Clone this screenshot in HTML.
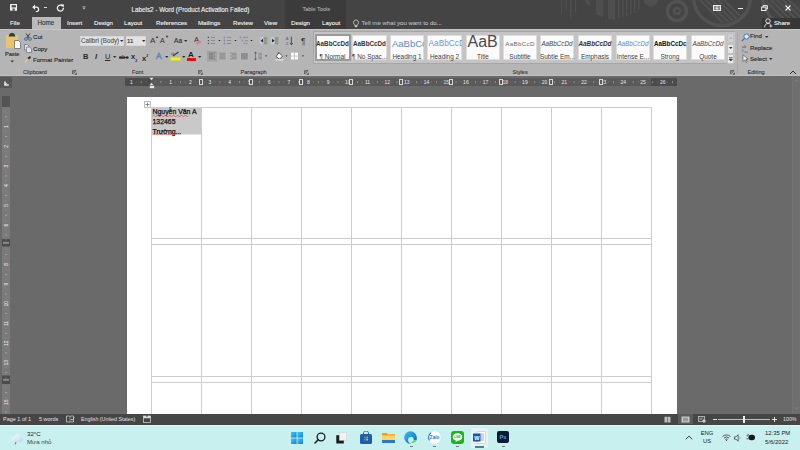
<!DOCTYPE html>
<html><head><meta charset="utf-8"><title>Word</title>
<style>
*{margin:0;padding:0;box-sizing:border-box}
html,body{width:800px;height:450px;overflow:hidden}
body{position:relative;background:#6a6a6a;font-family:"Liberation Sans",sans-serif;color:#262626}
.a{position:absolute;white-space:nowrap}
.t{font-size:6.1px;line-height:8px;-webkit-text-stroke:0.12px currentColor}
.w{color:#f0f0f0}
#tb{left:0;top:0;width:800px;height:30px;background:#444444}
#rib{left:0;top:29px;width:800px;height:47px;background:#b5b5b5;border-top:1px solid #c6c6c6;border-bottom:1px solid #c0c0c0}
#status{left:0;top:414px;width:800px;height:11px;background:#464646}
#task{left:0;top:425px;width:800px;height:25px;background:#c8f0ee;border-top:1px solid #def6f5}
#page{left:127px;top:97px;width:550px;height:317px;background:#fff}
</style></head><body>

<!-- Title bar -->
<div id="tb" class="a"></div>
<div class="a" style="left:285px;top:0;width:61px;height:30px;background:#3b3b3b"></div>

<!-- decorative pattern -->
<svg class="a" style="left:540px;top:0" width="260" height="30" viewBox="0 0 260 30">
 <g fill="#4f4f4f">
  <rect x="21" y="0" width="1.2" height="14"/><rect x="25.5" y="0" width="1.2" height="10"/><rect x="30" y="0" width="1.5" height="17"/><rect x="35" y="0" width="1.2" height="12"/>
  <path d="M45 0 H49 L51 6 L47 4 Z"/>
  <path d="M56 0 H63 V17 L56 14 Z"/>
  <path d="M68 0 H75 V20 L68 19 Z"/>
  <rect x="78" y="0" width="1.3" height="18"/><rect x="82" y="0" width="1.3" height="17"/><rect x="86" y="0" width="1.3" height="16"/><rect x="90" y="0" width="1.3" height="15"/><rect x="94" y="0" width="1.3" height="13"/><rect x="98" y="0" width="1.3" height="10"/>
  <circle cx="111" cy="-1" r="7.5"/>
 </g>
 <circle cx="137" cy="11" r="9.5" fill="none" stroke="#535353" stroke-width="3.4"/>
 <circle cx="137" cy="11" r="3" fill="none" stroke="#535353" stroke-width="2.2"/>
 <circle cx="182" cy="-3" r="28.5" fill="none" stroke="#525252" stroke-width="3.6"/>
 <clipPath id="cc"><circle cx="182" cy="-3" r="26"/></clipPath>
 <g clip-path="url(#cc)" stroke="#505050" stroke-width="2.4">
  <path d="M150 -10 L185 25 M156 -10 L191 25 M162 -10 L197 25 M168 -10 L203 25 M174 -10 L209 25"/>
 </g>
 <circle cx="262" cy="-8" r="40" fill="none" stroke="#525252" stroke-width="3.6"/>
 <clipPath id="cd"><circle cx="262" cy="-8" r="37"/></clipPath>
 <g clip-path="url(#cd)" stroke="#505050" stroke-width="2.4">
  <path d="M215 -10 L250 25 M221 -10 L256 25 M227 -10 L262 25 M233 -10 L268 25 M239 -10 L274 25"/>
 </g>
</svg>
<!-- QAT -->
<svg class="a" style="left:10px;top:4.3px" width="7.2" height="6.8" viewBox="0 0 7.2 6.8">
 <rect x="0" y="0" width="7.2" height="6.8" rx="0.7" fill="#f0f0f0"/>
 <rect x="1.6" y="1.2" width="4.3" height="2.2" fill="#444"/>
 <rect x="2.4" y="4.5" width="2.4" height="2.3" fill="#5a5a5a"/>
</svg>
<svg class="a" style="left:32px;top:4px" width="9" height="8" viewBox="0 0 9 8">
 <path d="M1 3.2 H5 A2.3 2.3 0 0 1 5 7.6 H3.8" fill="none" stroke="#f2f2f2" stroke-width="1.3"/>
 <path d="M0.2 3.2 L3 0.6 V5.8 Z" fill="#f2f2f2"/>
</svg>
<div class="a" style="left:44px;top:7px;width:2.8px;height:1.2px;background:#d8d8d8"></div>
<svg class="a" style="left:56px;top:4px" width="9" height="8" viewBox="0 0 9 8">
 <path d="M6.6 2 A3 3 0 1 0 7.4 4" fill="none" stroke="#f2f2f2" stroke-width="1.3"/>
 <path d="M4.8 0.3 L8 0.6 L7.6 3.8 Z" fill="#f2f2f2"/>
</svg>
<svg class="a" style="left:82px;top:6px" width="4" height="4" viewBox="0 0 4 4"><rect x="0.5" y="0" width="3" height="0.6" fill="#bbb"/><path d="M0.3 1.5H3.7L2 3.5Z" fill="#bbb"/></svg>
<!-- window controls -->
<svg class="a" style="left:713px;top:5px" width="8" height="6" viewBox="0 0 8 6">
 <rect x="0" y="0" width="8" height="6" fill="#e8e8e8"/>
 <rect x="1" y="1" width="6" height="4" fill="#8a8a8a"/>
 <path d="M4 1.2 V4.2 M2.7 3 L4 4.4 L5.3 3" stroke="#f4f4f4" stroke-width="0.8" fill="none"/>
</svg>
<div class="a" style="left:738px;top:8px;width:5px;height:1.3px;background:#eee"></div>
<svg class="a" style="left:761px;top:5px" width="7" height="6" viewBox="0 0 7 6">
 <rect x="0.6" y="2.1" width="4.3" height="3.4" fill="none" stroke="#eee" stroke-width="1"/>
 <path d="M2.1 2.1 V0.6 H6.4 V4 H4.9" fill="none" stroke="#eee" stroke-width="1"/>
</svg>
<svg class="a" style="left:785px;top:5px" width="6" height="6" viewBox="0 0 6 6">
 <path d="M0.5 0.5 L5.5 5.5 M5.5 0.5 L0.5 5.5" stroke="#f4f4f4" stroke-width="1.1"/>
</svg>
<div class="a t w" style="left:131.5px;top:5.5px;font-size:6.3px">Labels2 - Word (Product Activation Failed)</div>
<div class="a t" style="left:302.5px;top:5px;font-size:5.5px;color:#a9a9a9">Table Tools</div>

<!-- Tabs -->
<div class="a" style="left:32px;top:17px;width:28.5px;height:13px;background:#bababa"></div>
<div class="a t w" style="left:10px;top:18.9px">File</div>
<div class="a t" style="left:37.5px;top:18.8px;color:#333;font-size:6.3px">Home</div>
<div class="a t w" style="left:67px;top:18.9px">Insert</div>
<div class="a t w" style="left:94px;top:18.9px">Design</div>
<div class="a t w" style="left:124px;top:18.9px">Layout</div>
<div class="a t w" style="left:156px;top:18.9px">References</div>
<div class="a t w" style="left:198px;top:18.9px">Mailings</div>
<div class="a t w" style="left:233px;top:18.9px">Review</div>
<div class="a t w" style="left:264px;top:18.9px">View</div>
<div class="a t w" style="left:291px;top:18.9px">Design</div>
<div class="a t w" style="left:322px;top:18.9px">Layout</div>
<svg class="a" style="left:353px;top:19px" width="6" height="9" viewBox="0 0 6 9">
 <path d="M1.6 5.6 A2.5 2.5 0 1 1 4.4 5.6 V6.4 H1.6 Z" fill="none" stroke="#c8c8c8" stroke-width="0.9"/>
 <rect x="1.9" y="7" width="2.2" height="1.2" fill="#c8c8c8"/>
</svg>
<div class="a t" style="left:361.5px;top:18.9px;color:#b5b5b5">Tell me what you want to do...</div>
<div class="a" style="left:762px;top:18px;width:38px;height:11px;background:#373737"></div>
<svg class="a" style="left:764px;top:18px" width="9" height="10" viewBox="0 0 9 10">
 <circle cx="4" cy="3" r="2.2" fill="none" stroke="#eee" stroke-width="0.9"/>
 <path d="M0.6 9.4 A3.6 3.6 0 0 1 6.4 6.2" fill="none" stroke="#eee" stroke-width="0.9"/>
 <path d="M6.8 6.5V9.5M5.3 8H8.3" stroke="#eee" stroke-width="0.8"/>
</svg>
<div class="a t w" style="left:774px;top:18.9px">Share</div>

<!-- Ribbon -->
<div id="rib" class="a"></div>

<!-- Ribbon content -->
<!-- Clipboard -->
<svg class="a" style="left:5px;top:32px" width="17" height="18" viewBox="0 0 17 18">
 <rect x="1" y="3" width="12" height="13" fill="#e9c46f"/>
 <path d="M3.5 4.5 L4.5 2 L6 1 L8 1 L9.5 2 L10.5 4.5 Z" fill="#3a3a3a"/>
 <path d="M9.5 8.5 H13.5 L15.5 10.5 V16.5 H9.5 Z" fill="#fafafa" stroke="#6a6a6a" stroke-width="0.8"/>
</svg>
<div class="a t" style="left:5px;top:50px;font-size:5.6px">Paste</div>
<svg class="a" style="left:10px;top:60px" width="5" height="3"><path d="M0.5 0.5H4L2.25 2.5Z" fill="#333"/></svg>
<svg class="a" style="left:24px;top:33px" width="8" height="8" viewBox="0 0 8 8">
 <path d="M2 0.5 L5.2 5 M6 0.5 L2.8 5" stroke="#333" stroke-width="0.9" fill="none"/>
 <circle cx="2" cy="6" r="1.4" fill="none" stroke="#4a6a96" stroke-width="0.9"/>
 <circle cx="6" cy="6" r="1.4" fill="none" stroke="#4a6a96" stroke-width="0.9"/>
</svg>
<div class="a t" style="left:33px;top:32.9px">Cut</div>
<svg class="a" style="left:24px;top:44px" width="8" height="9" viewBox="0 0 8 9">
 <path d="M0.5 0.5H3.5L5 2V6H0.5Z" fill="#e4e4ec" stroke="#6a6a7a" stroke-width="0.7"/>
 <path d="M2.5 3H5.5L7.5 5V8.5H2.5Z" fill="#dfe3ee" stroke="#6a6a7a" stroke-width="0.7"/>
</svg>
<div class="a t" style="left:33px;top:44.5px">Copy</div>
<svg class="a" style="left:24px;top:55px" width="8" height="8" viewBox="0 0 8 8">
 <path d="M1 7 L4 4" stroke="#e8c070" stroke-width="2"/>
 <path d="M3.5 3 L6 1 L7 2.5 L5 4.5Z" fill="#2a2a2a"/>
</svg>
<div class="a t" style="left:33px;top:55.9px">Format Painter</div>
<div class="a t" style="left:23px;top:68px;color:#3a3a3a;font-size:5.6px">Clipboard</div>
<svg class="a" style="left:72px;top:70px" width="5" height="5"><path d="M0.5 0.5H4V1.2H1.2V4H0.5Z M2 2 L4.5 4.5 M4.5 2.5V4.5H2.5" stroke="#555" stroke-width="0.7" fill="none"/></svg>
<div class="a" style="left:78px;top:32px;width:1px;height:42px;background:#b4b4b4"></div>

<!-- Font -->
<div class="a" style="left:80px;top:36px;width:44px;height:10px;background:#e2e2e2;border:1px solid #d6d6d6"></div>
<div class="a t" style="left:81px;top:37px;color:#555;font-size:6.3px">Calibri (Body)</div>
<svg class="a" style="left:120px;top:40px" width="4" height="3"><path d="M0 0H3.5L1.75 2Z" fill="#333"/></svg>
<div class="a" style="left:126px;top:36px;width:20px;height:10px;background:#e2e2e2;border:1px solid #d6d6d6"></div>
<div class="a t" style="left:127px;top:37px;color:#333">11</div>
<svg class="a" style="left:142px;top:40px" width="4" height="3"><path d="M0 0H3.5L1.75 2Z" fill="#333"/></svg>
<div class="a" style="left:150px;top:36px;font-size:8px;line-height:9px;color:#333">A</div>
<div class="a" style="left:155px;top:35px;font-size:4px;line-height:4px;color:#333">▲</div>
<div class="a" style="left:160px;top:37px;font-size:7px;line-height:8px;color:#333">A</div>
<div class="a" style="left:165px;top:35px;font-size:4px;line-height:4px;color:#333">▼</div>
<div class="a" style="left:174px;top:36.2px;font-size:6.6px;line-height:9px;color:#333;-webkit-text-stroke:0.15px #333">Aa</div>
<svg class="a" style="left:183.5px;top:40px" width="4" height="3"><path d="M0 0H3.5L1.75 2Z" fill="#333"/></svg>
<div class="a" style="left:194px;top:35px;font-size:7.5px;line-height:9px;color:#333">A</div>
<div class="a" style="left:196px;top:41px;width:5px;height:3px;background:#e07a9a;transform:rotate(-30deg)"></div>

<div class="a" style="left:83px;top:52px;font-size:7.5px;line-height:9px;font-weight:bold;color:#2a2a2a">B</div>
<div class="a" style="left:95px;top:52px;font-size:7.5px;line-height:9px;font-weight:bold;font-style:italic;color:#2a2a2a">I</div>
<div class="a" style="left:105px;top:52px;font-size:7.5px;line-height:9px;text-decoration:underline;color:#2a2a2a">U</div>
<svg class="a" style="left:113px;top:56px" width="4" height="3"><path d="M0 0H3.5L1.75 2Z" fill="#333"/></svg>
<div class="a" style="left:119px;top:53px;font-size:5.5px;line-height:8px;text-decoration:line-through;font-weight:bold;color:#2a2a2a">abc</div>
<div class="a" style="left:131px;top:52px;font-size:7.5px;line-height:9px;font-weight:bold;color:#2a2a2a">x<sub style="font-size:3.5px">2</sub></div>
<div class="a" style="left:142px;top:52px;font-size:7.5px;line-height:9px;font-weight:bold;color:#2a2a2a">x<sup style="font-size:3.5px">2</sup></div>
<div class="a" style="left:156px;top:51px;font-size:8.5px;line-height:10px;color:#b9cde6;-webkit-text-stroke:0.6px #5f86b8">A</div>
<svg class="a" style="left:165px;top:56px" width="4" height="3"><path d="M0 0H3.5L1.75 2Z" fill="#333"/></svg>
<svg class="a" style="left:170px;top:51px" width="11" height="10" viewBox="0 0 11 10">
 <path d="M3 5 L8.5 1" stroke="#3a3a55" stroke-width="1.3"/>
 <text x="1" y="4" font-size="3" fill="#444" font-family="Liberation Sans">ab</text>
 <rect x="0.5" y="6.5" width="10" height="3" fill="#f2f20a"/>
</svg>
<svg class="a" style="left:182px;top:56px" width="4" height="3"><path d="M0 0H3.5L1.75 2Z" fill="#333"/></svg>
<div class="a" style="left:188px;top:50px;font-size:8px;line-height:9px;font-weight:bold;color:#222">A</div>
<div class="a" style="left:187px;top:58px;width:9px;height:2.5px;background:#e01010"></div>
<svg class="a" style="left:198px;top:56px" width="4" height="3"><path d="M0 0H3.5L1.75 2Z" fill="#333"/></svg>
<div class="a t" style="left:132px;top:68px;color:#3a3a3a;font-size:5.6px">Font</div>
<svg class="a" style="left:198px;top:70px" width="5" height="5"><path d="M0.5 0.5H4V1.2H1.2V4H0.5Z M2 2 L4.5 4.5 M4.5 2.5V4.5H2.5" stroke="#555" stroke-width="0.7" fill="none"/></svg>
<div class="a" style="left:204px;top:32px;width:1px;height:42px;background:#b4b4b4"></div>

<!-- Paragraph -->
<svg class="a" style="left:204px;top:32px" width="106" height="32" viewBox="0 0 106 32">
 <g fill="#3e4f6e"><rect x="3.8" y="4.8" width="1.2" height="1.2"/><rect x="3.8" y="8" width="1.2" height="1.2"/><rect x="3.8" y="10.9" width="1.2" height="1.2"/></g>
 <g stroke="#7a7a7a" stroke-width="0.7"><path d="M6.8 5.4H11M6.8 8.6H11M6.8 11.5H11"/></g>
 <path d="M14.3 7.9H16.6L15.45 9.3Z" fill="#222"/>
 <g fill="#5a7aa8"><rect x="19.8" y="4.6" width="0.9" height="1.8"/><rect x="19.8" y="7.8" width="0.9" height="1.8"/><rect x="19.8" y="10.7" width="0.9" height="1.8"/></g>
 <g stroke="#7a7a7a" stroke-width="0.7"><path d="M22.8 5.4H27.2M22.8 8.6H27.2M22.8 11.5H27.2"/></g>
 <path d="M30.3 7.9H32.6L31.45 9.3Z" fill="#222"/>
 <g fill="#7a8aa8"><rect x="35.8" y="4.6" width="1.4" height="1.5"/><rect x="37.8" y="7.8" width="1.4" height="1.5"/><rect x="40.2" y="10.6" width="1.2" height="1.4"/></g>
 <g stroke="#7a7a7a" stroke-width="0.7"><path d="M39 5.4H43.8M41 8.6H43.8M42 11.5H43.5"/></g>
 <path d="M46.3 7.9H48.6L47.45 9.3Z" fill="#222"/>
 <rect x="55.6" y="5" width="7.8" height="7.5" fill="#9aa39a"/>
 <rect x="55.6" y="5" width="4.2" height="7.5" fill="#c4c8d0"/>
 <path d="M59.4 6.2H62.6M59.4 8H62.6M59.4 9.8H62.6M59.4 11.5H62.6" stroke="#7a857a" stroke-width="0.6"/>
 <path d="M56.6 8.7 L59 6.8 V10.6Z" fill="#1e2840"/>
 <rect x="66.6" y="5" width="7.8" height="7.5" fill="#9aa39a"/>
 <rect x="66.6" y="5" width="4.2" height="7.5" fill="#c4c8d0"/>
 <path d="M70.8 6.2H74M70.8 8H74M70.8 9.8H74M70.8 11.5H74" stroke="#7a857a" stroke-width="0.6"/>
 <path d="M70.6 8.7 L68 6.8 V10.6Z" fill="#1e2840"/>
 <text x="81.5" y="8.4" font-size="4.4" fill="#6a72a8" font-family="Liberation Sans" font-weight="bold">A</text>
 <text x="81.7" y="12.9" font-size="4.4" fill="#7a72b0" font-family="Liberation Sans" font-weight="bold">Z</text>
 <path d="M87.4 4.6V12.4M86 11L87.4 12.8L88.8 11" stroke="#333" stroke-width="0.75" fill="none"/>
 <text x="97" y="12.4" font-size="8.2" fill="#333" font-family="Liberation Sans">¶</text>
 <!-- row 2 -->
 <rect x="2.9" y="18.9" width="10" height="10.7" fill="#a2a2a2"/>
 <g stroke="#7c7c7c" stroke-width="0.9"><path d="M5 21.2H11M5 22.6H9M5 24H11M5 25.4H9M5 26.8H11"/></g>
 <g stroke="#888" stroke-width="0.9"><path d="M15 21.2H22M16 22.6H21M15 24H22M16 25.4H21M15 26.8H22"/></g>
 <g stroke="#888" stroke-width="0.9"><path d="M26 21.2H32.5M28 22.6H32.5M26 24H32.5M28 25.4H32.5M26 26.8H32.5"/></g>
 <rect x="37" y="21" width="6.8" height="6.5" fill="#8e8e8e"/>
 <g fill="#3e5a80"><path d="M51.5 19.6 L53 21.6 H50Z"/><path d="M51.5 28.4 L53 26.4 H50Z"/></g>
 <path d="M51.5 21.2V26.8" stroke="#4a6a96" stroke-width="0.7"/>
 <g stroke="#8a8a8a" stroke-width="0.9"><path d="M54.5 21.2H58M54.5 22.6H58M54.5 24H58M54.5 25.4H58M54.5 26.8H58"/></g>
 <path d="M61 23.4H63.2L62.1 24.8Z" fill="#222"/>
 <path d="M72 24.5 L75 20.8 L78.6 24 L75.6 27.2Z" fill="#fafafa" stroke="#3a3a3a" stroke-width="0.8"/>
 <path d="M73.5 21 L75 20.8" stroke="#3a3a3a" stroke-width="0.8"/>
 <rect x="71.5" y="27.3" width="8" height="1.2" fill="#e8e8e8"/>
 <path d="M81.3 23.4H83.5L82.4 24.8Z" fill="#222"/>
 <rect x="87" y="20.7" width="7" height="6.8" fill="#fafafa"/>
 <path d="M90.5 20.7V27.5M87 24.1H94" stroke="#a8a8a8" stroke-width="0.6"/>
 <path d="M97.8 23.4H100L98.9 24.8Z" fill="#222"/>
</svg>
<div class="a t" style="left:240.5px;top:68px;color:#3a3a3a;font-size:5.6px">Paragraph</div>
<svg class="a" style="left:304px;top:70px" width="5" height="5"><path d="M0.5 0.5H4V1.2H1.2V4H0.5Z M2 2 L4.5 4.5 M4.5 2.5V4.5H2.5" stroke="#555" stroke-width="0.7" fill="none"/></svg>
<div class="a" style="left:310px;top:32px;width:1px;height:42px;background:#b4b4b4"></div>

<!-- Styles -->
<div class="a" style="left:313px;top:31px;width:422px;height:33px;background:#c4c4c4;border:1px solid #a6a6a6;border-right:none"></div>
<div class="a" style="left:314.5px;top:33.5px;width:36px;height:27.5px;background:#fbfbfb;border:2.5px solid #9a9a9a"></div>
<div class="a" style="left:352px;top:34.5px;width:35px;height:25px;background:#fbfbfb;border:1px solid #dcdcdc"></div>
<div class="a" style="left:390px;top:34.5px;width:34px;height:25px;background:#fbfbfb;border:1px solid #dcdcdc"></div>
<div class="a" style="left:427px;top:34.5px;width:35px;height:25px;background:#fbfbfb;border:1px solid #dcdcdc"></div>
<div class="a" style="left:466px;top:34.5px;width:34px;height:25px;background:#fbfbfb;border:1px solid #dcdcdc"></div>
<div class="a" style="left:503px;top:34.5px;width:34px;height:25px;background:#fbfbfb;border:1px solid #dcdcdc"></div>
<div class="a" style="left:540px;top:34.5px;width:34px;height:25px;background:#fbfbfb;border:1px solid #dcdcdc"></div>
<div class="a" style="left:578px;top:34.5px;width:34px;height:25px;background:#fbfbfb;border:1px solid #dcdcdc"></div>
<div class="a" style="left:616px;top:34.5px;width:34px;height:25px;background:#fbfbfb;border:1px solid #dcdcdc"></div>
<div class="a" style="left:653px;top:34.5px;width:34px;height:25px;background:#fbfbfb;border:1px solid #dcdcdc"></div>
<div class="a" style="left:691px;top:34.5px;width:34px;height:25px;background:#fbfbfb;border:1px solid #dcdcdc"></div>
<div class="a" style="left:315px;top:39.5px;width:35px;font-size:6.3px;line-height:8px;font-weight:bold;color:#333;text-align:center">AaBbCcDd</div>
<div class="a" style="left:315px;top:52.8px;width:35px;text-align:center;font-size:6.4px;line-height:8px;color:#3c3c3c">¶ Normal</div>
<div class="a" style="left:352px;top:39.5px;width:35px;font-size:6.3px;line-height:8px;font-weight:bold;color:#333;text-align:center">AaBbCcDd</div>
<div class="a" style="left:352px;top:52.8px;width:35px;text-align:center;font-size:6.4px;line-height:8px;color:#3c3c3c">¶ No Spac...</div>
<div class="a" style="left:390px;top:38.5px;width:34px;font-size:9.5px;line-height:10px;color:#5d8cc4;padding-left:2px;overflow:hidden">AaBbCc</div>
<div class="a" style="left:390px;top:52.8px;width:34px;text-align:center;font-size:6.4px;line-height:8px;color:#3c3c3c">Heading 1</div>
<div class="a" style="left:427px;top:39.2px;width:35px;font-size:8.3px;line-height:9px;color:#6d9ad0;padding-left:1.5px;overflow:hidden">AaBbCcD</div>
<div class="a" style="left:427px;top:52.8px;width:35px;text-align:center;font-size:6.4px;line-height:8px;color:#3c3c3c">Heading 2</div>
<svg class="a" style="left:466px;top:35px" width="34" height="13" viewBox="0 0 34 13"><text x="1.5" y="11.8" font-size="16" fill="#4a4a4a" font-family="Liberation Sans">AaB</text></svg>
<div class="a" style="left:466px;top:52.8px;width:34px;text-align:center;font-size:6.4px;line-height:8px;color:#3c3c3c">Title</div>
<div class="a" style="left:503px;top:39.5px;width:34px;font-size:6.2px;line-height:8px;color:#6a6a6a;letter-spacing:0.35px;text-align:center">AaBbCcD</div>
<div class="a" style="left:503px;top:52.8px;width:34px;text-align:center;font-size:6.4px;line-height:8px;color:#3c3c3c">Subtitle</div>
<div class="a" style="left:540px;top:39.5px;width:34px;font-size:6.3px;line-height:8px;font-style:italic;color:#444;text-align:center">AaBbCcDd</div>
<div class="a" style="left:540px;top:52.8px;width:34px;text-align:center;font-size:6.4px;line-height:8px;color:#3c3c3c">Subtle Em...</div>
<div class="a" style="left:578px;top:39.5px;width:34px;font-size:6.3px;line-height:8px;font-style:italic;font-weight:bold;color:#333;text-align:center">AaBbCcDd</div>
<div class="a" style="left:578px;top:52.8px;width:34px;text-align:center;font-size:6.4px;line-height:8px;color:#3c3c3c">Emphasis</div>
<div class="a" style="left:616px;top:39.5px;width:34px;font-size:6.3px;line-height:8px;font-style:italic;color:#5b8cc7;text-align:center">AaBbCcDd</div>
<div class="a" style="left:616px;top:52.8px;width:34px;text-align:center;font-size:6.4px;line-height:8px;color:#3c3c3c">Intense E...</div>
<div class="a" style="left:653px;top:39.5px;width:34px;font-size:6.3px;line-height:8px;font-weight:bold;color:#111;padding-left:1px;overflow:hidden">AaBbCcDc</div>
<div class="a" style="left:653px;top:52.8px;width:34px;text-align:center;font-size:6.4px;line-height:8px;color:#3c3c3c">Strong</div>
<div class="a" style="left:691px;top:39.5px;width:34px;font-size:6.3px;line-height:8px;font-style:italic;color:#444;text-align:center">AaBbCcDd</div>
<div class="a" style="left:691px;top:52.8px;width:34px;text-align:center;font-size:6.4px;line-height:8px;color:#3c3c3c">Quote</div>
<div class="a" style="left:727px;top:33px;width:7px;height:10px;background:#cfcfcf;border:1px solid #c2c2c2"></div>
<div class="a" style="left:727px;top:43.5px;width:7px;height:10px;background:#e8e8e8;border:1px solid #c2c2c2"></div>
<div class="a" style="left:727px;top:54px;width:7px;height:9.5px;background:#e8e8e8;border:1px solid #c2c2c2"></div>
<svg class="a" style="left:729px;top:47px" width="4" height="3"><path d="M0 0H3.5L1.75 2Z" fill="#333"/></svg>
<svg class="a" style="left:729px;top:56.5px" width="4" height="5"><path d="M0 0.5H3.5M0 2H3.5L1.75 4Z" stroke="#333" stroke-width="0.6" fill="#333"/></svg>
<svg class="a" style="left:729px;top:37px" width="4" height="3"><path d="M0 2H3.5L1.75 0Z" fill="#b0b0b0"/></svg>
<div class="a t" style="left:512.5px;top:68px;color:#3a3a3a;font-size:5.6px">Styles</div>
<svg class="a" style="left:730px;top:70px" width="5" height="5"><path d="M0.5 0.5H4V1.2H1.2V4H0.5Z M2 2 L4.5 4.5 M4.5 2.5V4.5H2.5" stroke="#555" stroke-width="0.7" fill="none"/></svg>
<div class="a" style="left:737px;top:32px;width:1px;height:42px;background:#a8a8a8"></div>

<!-- Editing -->
<svg class="a" style="left:741px;top:33px" width="9" height="9" viewBox="0 0 9 9">
 <circle cx="5.5" cy="3.5" r="2.6" fill="#dbe6f4" stroke="#3b6fb0" stroke-width="0.9"/>
 <path d="M3.6 5.4 L0.8 8.2" stroke="#3b6fb0" stroke-width="1.2"/>
</svg>
<div class="a t" style="left:750px;top:32.4px">Find</div>
<svg class="a" style="left:765px;top:36px" width="4" height="3"><path d="M0 0H3.5L1.75 2Z" fill="#333"/></svg>
<svg class="a" style="left:741px;top:44px" width="9" height="9" viewBox="0 0 9 9">
 <text x="1" y="4" font-size="4" fill="#555" font-family="Liberation Sans">ab</text>
 <text x="3" y="8.5" font-size="4" fill="#3b6fb0" font-family="Liberation Sans">ac</text>
 <path d="M1 5 L2.5 7 L1 8" stroke="#3b6fb0" stroke-width="0.6" fill="none"/>
</svg>
<div class="a t" style="left:750px;top:44px">Replace</div>
<svg class="a" style="left:742px;top:54px" width="7" height="9" viewBox="0 0 7 9">
 <path d="M1 0.8 V7.5 L2.8 5.8 L4.2 8.5 L5.2 8 L3.9 5.3 L6.2 5.3 Z" fill="#f4f4f4" stroke="#444" stroke-width="0.6"/>
</svg>
<div class="a t" style="left:750px;top:55px">Select</div>
<svg class="a" style="left:769px;top:58px" width="4" height="3"><path d="M0 0H3.5L1.75 2Z" fill="#333"/></svg>
<div class="a t" style="left:747.5px;top:68px;color:#3a3a3a;font-size:5.6px">Editing</div>
<div class="a" style="left:776px;top:32px;width:1px;height:42px;background:#b4b4b4"></div>
<svg class="a" style="left:789px;top:70px" width="8" height="5" viewBox="0 0 8 5"><path d="M1 4 L4 1 L7 4" stroke="#333" stroke-width="1" fill="none"/></svg>

<!-- Ruler -->
<div class="a" style="left:0;top:77px;width:12px;height:11px;background:#575757"></div>
<svg class="a" style="left:4px;top:80.5px" width="5" height="5" viewBox="0 0 5 5"><path d="M0.2 0.5 H1.8 V3.2 H4.8 V4.8 H0.2 Z" fill="#e8e8e8"/><path d="M1.8 1.8 L3.4 3.2" stroke="#e8e8e8" stroke-width="0.8"/></svg>
<svg class="a" style="left:125px;top:77px" width="552" height="10" viewBox="0 0 552 10">
<rect x="0" y="1" width="552" height="8" fill="#5a5a5a"/>
<rect x="0" y="1" width="26" height="8" fill="#4b4b4b"/>
<rect x="526" y="1" width="26" height="8" fill="#4b4b4b"/>
<rect x="10.8" y="4.6" width="0.8" height="0.8" fill="#8a8a8a"/>
<rect x="15.8" y="4" width="0.8" height="2.2" fill="#9a9a9a"/>
<rect x="20.7" y="4.6" width="0.8" height="0.8" fill="#8a8a8a"/>
<rect x="30.5" y="4.6" width="0.8" height="0.8" fill="#8a8a8a"/>
<rect x="35.4" y="4" width="0.8" height="2.2" fill="#9a9a9a"/>
<rect x="40.4" y="4.6" width="0.8" height="0.8" fill="#8a8a8a"/>
<rect x="50.2" y="4.6" width="0.8" height="0.8" fill="#8a8a8a"/>
<rect x="55.1" y="4" width="0.8" height="2.2" fill="#9a9a9a"/>
<rect x="60.0" y="4.6" width="0.8" height="0.8" fill="#8a8a8a"/>
<rect x="69.9" y="4.6" width="0.8" height="0.8" fill="#8a8a8a"/>
<rect x="74.8" y="4" width="0.8" height="2.2" fill="#9a9a9a"/>
<rect x="79.7" y="4.6" width="0.8" height="0.8" fill="#8a8a8a"/>
<rect x="89.6" y="4.6" width="0.8" height="0.8" fill="#8a8a8a"/>
<rect x="94.5" y="4" width="0.8" height="2.2" fill="#9a9a9a"/>
<rect x="99.4" y="4.6" width="0.8" height="0.8" fill="#8a8a8a"/>
<rect x="109.2" y="4.6" width="0.8" height="0.8" fill="#8a8a8a"/>
<rect x="114.2" y="4" width="0.8" height="2.2" fill="#9a9a9a"/>
<rect x="119.1" y="4.6" width="0.8" height="0.8" fill="#8a8a8a"/>
<rect x="128.9" y="4.6" width="0.8" height="0.8" fill="#8a8a8a"/>
<rect x="133.8" y="4" width="0.8" height="2.2" fill="#9a9a9a"/>
<rect x="138.8" y="4.6" width="0.8" height="0.8" fill="#8a8a8a"/>
<rect x="148.6" y="4.6" width="0.8" height="0.8" fill="#8a8a8a"/>
<rect x="153.5" y="4" width="0.8" height="2.2" fill="#9a9a9a"/>
<rect x="158.4" y="4.6" width="0.8" height="0.8" fill="#8a8a8a"/>
<rect x="168.3" y="4.6" width="0.8" height="0.8" fill="#8a8a8a"/>
<rect x="173.2" y="4" width="0.8" height="2.2" fill="#9a9a9a"/>
<rect x="178.1" y="4.6" width="0.8" height="0.8" fill="#8a8a8a"/>
<rect x="188.0" y="4.6" width="0.8" height="0.8" fill="#8a8a8a"/>
<rect x="192.9" y="4" width="0.8" height="2.2" fill="#9a9a9a"/>
<rect x="197.8" y="4.6" width="0.8" height="0.8" fill="#8a8a8a"/>
<rect x="207.6" y="4.6" width="0.8" height="0.8" fill="#8a8a8a"/>
<rect x="212.6" y="4" width="0.8" height="2.2" fill="#9a9a9a"/>
<rect x="217.5" y="4.6" width="0.8" height="0.8" fill="#8a8a8a"/>
<rect x="227.3" y="4.6" width="0.8" height="0.8" fill="#8a8a8a"/>
<rect x="232.2" y="4" width="0.8" height="2.2" fill="#9a9a9a"/>
<rect x="237.2" y="4.6" width="0.8" height="0.8" fill="#8a8a8a"/>
<rect x="247.0" y="4.6" width="0.8" height="0.8" fill="#8a8a8a"/>
<rect x="251.9" y="4" width="0.8" height="2.2" fill="#9a9a9a"/>
<rect x="256.8" y="4.6" width="0.8" height="0.8" fill="#8a8a8a"/>
<rect x="266.7" y="4.6" width="0.8" height="0.8" fill="#8a8a8a"/>
<rect x="271.6" y="4" width="0.8" height="2.2" fill="#9a9a9a"/>
<rect x="276.5" y="4.6" width="0.8" height="0.8" fill="#8a8a8a"/>
<rect x="286.4" y="4.6" width="0.8" height="0.8" fill="#8a8a8a"/>
<rect x="291.3" y="4" width="0.8" height="2.2" fill="#9a9a9a"/>
<rect x="296.2" y="4.6" width="0.8" height="0.8" fill="#8a8a8a"/>
<rect x="306.0" y="4.6" width="0.8" height="0.8" fill="#8a8a8a"/>
<rect x="311.0" y="4" width="0.8" height="2.2" fill="#9a9a9a"/>
<rect x="315.9" y="4.6" width="0.8" height="0.8" fill="#8a8a8a"/>
<rect x="325.7" y="4.6" width="0.8" height="0.8" fill="#8a8a8a"/>
<rect x="330.6" y="4" width="0.8" height="2.2" fill="#9a9a9a"/>
<rect x="335.6" y="4.6" width="0.8" height="0.8" fill="#8a8a8a"/>
<rect x="345.4" y="4.6" width="0.8" height="0.8" fill="#8a8a8a"/>
<rect x="350.3" y="4" width="0.8" height="2.2" fill="#9a9a9a"/>
<rect x="355.2" y="4.6" width="0.8" height="0.8" fill="#8a8a8a"/>
<rect x="365.1" y="4.6" width="0.8" height="0.8" fill="#8a8a8a"/>
<rect x="370.0" y="4" width="0.8" height="2.2" fill="#9a9a9a"/>
<rect x="374.9" y="4.6" width="0.8" height="0.8" fill="#8a8a8a"/>
<rect x="384.8" y="4.6" width="0.8" height="0.8" fill="#8a8a8a"/>
<rect x="389.7" y="4" width="0.8" height="2.2" fill="#9a9a9a"/>
<rect x="394.6" y="4.6" width="0.8" height="0.8" fill="#8a8a8a"/>
<rect x="404.4" y="4.6" width="0.8" height="0.8" fill="#8a8a8a"/>
<rect x="409.4" y="4" width="0.8" height="2.2" fill="#9a9a9a"/>
<rect x="414.3" y="4.6" width="0.8" height="0.8" fill="#8a8a8a"/>
<rect x="424.1" y="4.6" width="0.8" height="0.8" fill="#8a8a8a"/>
<rect x="429.0" y="4" width="0.8" height="2.2" fill="#9a9a9a"/>
<rect x="434.0" y="4.6" width="0.8" height="0.8" fill="#8a8a8a"/>
<rect x="443.8" y="4.6" width="0.8" height="0.8" fill="#8a8a8a"/>
<rect x="448.7" y="4" width="0.8" height="2.2" fill="#9a9a9a"/>
<rect x="453.6" y="4.6" width="0.8" height="0.8" fill="#8a8a8a"/>
<rect x="463.5" y="4.6" width="0.8" height="0.8" fill="#8a8a8a"/>
<rect x="468.4" y="4" width="0.8" height="2.2" fill="#9a9a9a"/>
<rect x="473.3" y="4.6" width="0.8" height="0.8" fill="#8a8a8a"/>
<rect x="483.2" y="4.6" width="0.8" height="0.8" fill="#8a8a8a"/>
<rect x="488.1" y="4" width="0.8" height="2.2" fill="#9a9a9a"/>
<rect x="493.0" y="4.6" width="0.8" height="0.8" fill="#8a8a8a"/>
<rect x="502.8" y="4.6" width="0.8" height="0.8" fill="#8a8a8a"/>
<rect x="507.8" y="4" width="0.8" height="2.2" fill="#9a9a9a"/>
<rect x="512.7" y="4.6" width="0.8" height="0.8" fill="#8a8a8a"/>
<rect x="522.5" y="4.6" width="0.8" height="0.8" fill="#8a8a8a"/>
<rect x="527.4" y="4" width="0.8" height="2.2" fill="#9a9a9a"/>
<rect x="532.4" y="4.6" width="0.8" height="0.8" fill="#8a8a8a"/>
<rect x="542.2" y="4.6" width="0.8" height="0.8" fill="#8a8a8a"/>
<rect x="547.1" y="4" width="0.8" height="2.2" fill="#9a9a9a"/>
<text x="6.3" y="7.2" font-size="5" text-anchor="middle" fill="#e6e6e6" font-family="Liberation Sans">1</text>
<text x="45.7" y="7.2" font-size="5" text-anchor="middle" fill="#e6e6e6" font-family="Liberation Sans">1</text>
<text x="65.4" y="7.2" font-size="5" text-anchor="middle" fill="#e6e6e6" font-family="Liberation Sans">2</text>
<text x="85.0" y="7.2" font-size="5" text-anchor="middle" fill="#e6e6e6" font-family="Liberation Sans">3</text>
<text x="104.7" y="7.2" font-size="5" text-anchor="middle" fill="#e6e6e6" font-family="Liberation Sans">4</text>
<text x="124.4" y="7.2" font-size="5" text-anchor="middle" fill="#e6e6e6" font-family="Liberation Sans">5</text>
<text x="144.1" y="7.2" font-size="5" text-anchor="middle" fill="#e6e6e6" font-family="Liberation Sans">6</text>
<text x="163.8" y="7.2" font-size="5" text-anchor="middle" fill="#e6e6e6" font-family="Liberation Sans">7</text>
<text x="183.4" y="7.2" font-size="5" text-anchor="middle" fill="#e6e6e6" font-family="Liberation Sans">8</text>
<text x="203.1" y="7.2" font-size="5" text-anchor="middle" fill="#e6e6e6" font-family="Liberation Sans">9</text>
<text x="222.8" y="7.2" font-size="5" text-anchor="middle" fill="#e6e6e6" font-family="Liberation Sans">10</text>
<text x="242.5" y="7.2" font-size="5" text-anchor="middle" fill="#e6e6e6" font-family="Liberation Sans">11</text>
<text x="262.2" y="7.2" font-size="5" text-anchor="middle" fill="#e6e6e6" font-family="Liberation Sans">12</text>
<text x="281.8" y="7.2" font-size="5" text-anchor="middle" fill="#e6e6e6" font-family="Liberation Sans">13</text>
<text x="301.5" y="7.2" font-size="5" text-anchor="middle" fill="#e6e6e6" font-family="Liberation Sans">14</text>
<text x="321.2" y="7.2" font-size="5" text-anchor="middle" fill="#e6e6e6" font-family="Liberation Sans">15</text>
<text x="340.9" y="7.2" font-size="5" text-anchor="middle" fill="#e6e6e6" font-family="Liberation Sans">16</text>
<text x="360.6" y="7.2" font-size="5" text-anchor="middle" fill="#e6e6e6" font-family="Liberation Sans">17</text>
<text x="380.2" y="7.2" font-size="5" text-anchor="middle" fill="#e6e6e6" font-family="Liberation Sans">18</text>
<text x="399.9" y="7.2" font-size="5" text-anchor="middle" fill="#e6e6e6" font-family="Liberation Sans">19</text>
<text x="419.6" y="7.2" font-size="5" text-anchor="middle" fill="#e6e6e6" font-family="Liberation Sans">20</text>
<text x="439.3" y="7.2" font-size="5" text-anchor="middle" fill="#e6e6e6" font-family="Liberation Sans">21</text>
<text x="459.0" y="7.2" font-size="5" text-anchor="middle" fill="#e6e6e6" font-family="Liberation Sans">22</text>
<text x="478.6" y="7.2" font-size="5" text-anchor="middle" fill="#e6e6e6" font-family="Liberation Sans">23</text>
<text x="498.3" y="7.2" font-size="5" text-anchor="middle" fill="#e6e6e6" font-family="Liberation Sans">24</text>
<text x="518.0" y="7.2" font-size="5" text-anchor="middle" fill="#e6e6e6" font-family="Liberation Sans">25</text>
<text x="537.7" y="7.2" font-size="5" text-anchor="middle" fill="#e6e6e6" font-family="Liberation Sans">26</text>
<rect x="74.0" y="2" width="4" height="6" fill="#d8d8d8"/><rect x="75.0" y="3" width="2" height="4" fill="#5a5a5a"/>
<rect x="124.0" y="2" width="4" height="6" fill="#d8d8d8"/><rect x="125.0" y="3" width="2" height="4" fill="#5a5a5a"/>
<rect x="174.0" y="2" width="4" height="6" fill="#d8d8d8"/><rect x="175.0" y="3" width="2" height="4" fill="#5a5a5a"/>
<rect x="224.0" y="2" width="4" height="6" fill="#d8d8d8"/><rect x="225.0" y="3" width="2" height="4" fill="#5a5a5a"/>
<rect x="274.0" y="2" width="4" height="6" fill="#d8d8d8"/><rect x="275.0" y="3" width="2" height="4" fill="#5a5a5a"/>
<rect x="324.0" y="2" width="4" height="6" fill="#d8d8d8"/><rect x="325.0" y="3" width="2" height="4" fill="#5a5a5a"/>
<rect x="374.0" y="2" width="4" height="6" fill="#d8d8d8"/><rect x="375.0" y="3" width="2" height="4" fill="#5a5a5a"/>
<rect x="424.0" y="2" width="4" height="6" fill="#d8d8d8"/><rect x="425.0" y="3" width="2" height="4" fill="#5a5a5a"/>
<rect x="474.0" y="2" width="4" height="6" fill="#d8d8d8"/><rect x="475.0" y="3" width="2" height="4" fill="#5a5a5a"/>
<path d="M24 0.5 H29 L26.5 3.5 Z M24 8.5 H29 L26.5 5.5 Z" fill="#e8e8e8" stroke="#444" stroke-width="0.4"/>
</svg>
<svg class="a" style="left:149px;top:85px" width="6" height="4"><rect x="0.5" y="0.5" width="5" height="3" fill="#e8e8e8" stroke="#444" stroke-width="0.4"/></svg>
<svg class="a" style="left:2px;top:96px" width="8" height="318" viewBox="0 0 8 318">
<rect x="0" y="0" width="8" height="318" fill="#7a7a7a"/>
<rect x="0" y="0" width="8" height="11" fill="#545454"/><rect x="0" y="143" width="8" height="7.5" fill="#4c4c4c"/><rect x="1" y="145.8" width="6" height="2" fill="#8a8a8a"/><rect x="0" y="279.5" width="8" height="8.5" fill="#4c4c4c"/><rect x="1" y="282.8" width="6" height="2" fill="#8a8a8a"/>
<rect x="3.6" y="15.5" width="0.8" height="0.8" fill="#999"/>
<rect x="3" y="20.4" width="2.2" height="0.8" fill="#aaa"/>
<rect x="3.6" y="25.4" width="0.8" height="0.8" fill="#999"/>
<text x="0" y="0" font-size="5" text-anchor="middle" fill="#f0f0f0" font-family="Liberation Sans" transform="translate(5.8 30.7) rotate(-90)">1</text>
<rect x="3.6" y="35.2" width="0.8" height="0.8" fill="#999"/>
<rect x="3" y="40.1" width="2.2" height="0.8" fill="#aaa"/>
<rect x="3.6" y="45.0" width="0.8" height="0.8" fill="#999"/>
<text x="0" y="0" font-size="5" text-anchor="middle" fill="#f0f0f0" font-family="Liberation Sans" transform="translate(5.8 50.4) rotate(-90)">2</text>
<rect x="3.6" y="54.9" width="0.8" height="0.8" fill="#999"/>
<rect x="3" y="59.8" width="2.2" height="0.8" fill="#aaa"/>
<rect x="3.6" y="64.7" width="0.8" height="0.8" fill="#999"/>
<text x="0" y="0" font-size="5" text-anchor="middle" fill="#f0f0f0" font-family="Liberation Sans" transform="translate(5.8 70.0) rotate(-90)">3</text>
<rect x="3.6" y="74.6" width="0.8" height="0.8" fill="#999"/>
<rect x="3" y="79.5" width="2.2" height="0.8" fill="#aaa"/>
<rect x="3.6" y="84.4" width="0.8" height="0.8" fill="#999"/>
<text x="0" y="0" font-size="5" text-anchor="middle" fill="#f0f0f0" font-family="Liberation Sans" transform="translate(5.8 89.7) rotate(-90)">4</text>
<rect x="3.6" y="94.2" width="0.8" height="0.8" fill="#999"/>
<rect x="3" y="99.2" width="2.2" height="0.8" fill="#aaa"/>
<rect x="3.6" y="104.1" width="0.8" height="0.8" fill="#999"/>
<text x="0" y="0" font-size="5" text-anchor="middle" fill="#f0f0f0" font-family="Liberation Sans" transform="translate(5.8 109.4) rotate(-90)">5</text>
<rect x="3.6" y="113.9" width="0.8" height="0.8" fill="#999"/>
<rect x="3" y="118.8" width="2.2" height="0.8" fill="#aaa"/>
<rect x="3.6" y="123.8" width="0.8" height="0.8" fill="#999"/>
<text x="0" y="0" font-size="5" text-anchor="middle" fill="#f0f0f0" font-family="Liberation Sans" transform="translate(5.8 129.1) rotate(-90)">6</text>
<rect x="3.6" y="133.6" width="0.8" height="0.8" fill="#999"/>
<rect x="3" y="138.5" width="2.2" height="0.8" fill="#aaa"/>
<rect x="3.6" y="143.4" width="0.8" height="0.8" fill="#999"/>

<rect x="3.6" y="153.3" width="0.8" height="0.8" fill="#999"/>
<rect x="3" y="158.2" width="2.2" height="0.8" fill="#aaa"/>
<rect x="3.6" y="163.1" width="0.8" height="0.8" fill="#999"/>
<text x="0" y="0" font-size="5" text-anchor="middle" fill="#f0f0f0" font-family="Liberation Sans" transform="translate(5.8 168.4) rotate(-90)">8</text>
<rect x="3.6" y="173.0" width="0.8" height="0.8" fill="#999"/>
<rect x="3" y="177.9" width="2.2" height="0.8" fill="#aaa"/>
<rect x="3.6" y="182.8" width="0.8" height="0.8" fill="#999"/>
<text x="0" y="0" font-size="5" text-anchor="middle" fill="#f0f0f0" font-family="Liberation Sans" transform="translate(5.8 188.1) rotate(-90)">9</text>
<rect x="3.6" y="192.6" width="0.8" height="0.8" fill="#999"/>
<rect x="3" y="197.6" width="2.2" height="0.8" fill="#aaa"/>
<rect x="3.6" y="202.5" width="0.8" height="0.8" fill="#999"/>
<text x="0" y="0" font-size="5" text-anchor="middle" fill="#f0f0f0" font-family="Liberation Sans" transform="translate(5.8 207.8) rotate(-90)">10</text>
<rect x="3.6" y="212.3" width="0.8" height="0.8" fill="#999"/>
<rect x="3" y="217.2" width="2.2" height="0.8" fill="#aaa"/>
<rect x="3.6" y="222.2" width="0.8" height="0.8" fill="#999"/>
<text x="0" y="0" font-size="5" text-anchor="middle" fill="#f0f0f0" font-family="Liberation Sans" transform="translate(5.8 227.5) rotate(-90)">11</text>
<rect x="3.6" y="232.0" width="0.8" height="0.8" fill="#999"/>
<rect x="3" y="236.9" width="2.2" height="0.8" fill="#aaa"/>
<rect x="3.6" y="241.8" width="0.8" height="0.8" fill="#999"/>
<text x="0" y="0" font-size="5" text-anchor="middle" fill="#f0f0f0" font-family="Liberation Sans" transform="translate(5.8 247.2) rotate(-90)">12</text>
<rect x="3.6" y="251.7" width="0.8" height="0.8" fill="#999"/>
<rect x="3" y="256.6" width="2.2" height="0.8" fill="#aaa"/>
<rect x="3.6" y="261.5" width="0.8" height="0.8" fill="#999"/>
<text x="0" y="0" font-size="5" text-anchor="middle" fill="#f0f0f0" font-family="Liberation Sans" transform="translate(5.8 266.8) rotate(-90)">13</text>
<rect x="3.6" y="271.4" width="0.8" height="0.8" fill="#999"/>
<rect x="3" y="276.3" width="2.2" height="0.8" fill="#aaa"/>
<rect x="3.6" y="281.2" width="0.8" height="0.8" fill="#999"/>

<rect x="3.6" y="291.0" width="0.8" height="0.8" fill="#999"/>
<rect x="3" y="296.0" width="2.2" height="0.8" fill="#aaa"/>
<rect x="3.6" y="300.9" width="0.8" height="0.8" fill="#999"/>
<text x="0" y="0" font-size="5" text-anchor="middle" fill="#f0f0f0" font-family="Liberation Sans" transform="translate(5.8 306.2) rotate(-90)">15</text>
<rect x="3.6" y="310.7" width="0.8" height="0.8" fill="#999"/>
<rect x="3" y="315.6" width="2.2" height="0.8" fill="#aaa"/>
<text x="0" y="0" font-size="5" text-anchor="middle" fill="#f0f0f0" font-family="Liberation Sans" transform="translate(5.8 325.9) rotate(-90)">16</text>




</svg>

<div class="a" style="left:792px;top:76px;width:8px;height:338px;background:#6e6e6e;border-left:1px solid #737373"></div>
<svg class="a" style="left:794px;top:79px" width="5" height="4"><path d="M0.5 3 L2.5 1 L4.5 3" stroke="#8a8a8a" stroke-width="0.7" fill="none"/></svg>
<svg class="a" style="left:794px;top:406px" width="5" height="4"><path d="M0.5 1 L2.5 3 L4.5 1" stroke="#8a8a8a" stroke-width="0.7" fill="none"/></svg>
<!-- Page -->
<div id="page" class="a"></div>
<svg class="a" style="left:127px;top:97px" width="550" height="317" viewBox="0 0 550 317">
<rect x="24.5" y="10.5" width="49.5" height="27" fill="#c9c9c9"/>
<rect x="24.0" y="10" width="1" height="307" fill="#cdcdcd"/>
<rect x="74.0" y="10" width="1" height="307" fill="#cdcdcd"/>
<rect x="124.0" y="10" width="1" height="307" fill="#cdcdcd"/>
<rect x="174.0" y="10" width="1" height="307" fill="#cdcdcd"/>
<rect x="224.0" y="10" width="1" height="307" fill="#cdcdcd"/>
<rect x="274.0" y="10" width="1" height="307" fill="#cdcdcd"/>
<rect x="324.0" y="10" width="1" height="307" fill="#cdcdcd"/>
<rect x="374.0" y="10" width="1" height="307" fill="#cdcdcd"/>
<rect x="424.0" y="10" width="1" height="307" fill="#cdcdcd"/>
<rect x="474.0" y="10" width="1" height="307" fill="#cdcdcd"/>
<rect x="524.0" y="10" width="1" height="307" fill="#cdcdcd"/>
<rect x="24" y="10" width="501" height="1" fill="#cdcdcd"/>
<rect x="24" y="141" width="501" height="1" fill="#cdcdcd"/>
<rect x="24" y="147" width="501" height="1" fill="#cdcdcd"/>
<rect x="24" y="279" width="501" height="1" fill="#cdcdcd"/>
<rect x="24" y="285" width="501" height="1" fill="#cdcdcd"/>
<rect x="17.5" y="4.5" width="6" height="6" fill="#fff" stroke="#b0b0b0" stroke-width="0.8"/>
<path d="M20.5 5.5V9.5M18.5 7.5H22.5" stroke="#666" stroke-width="0.7"/>
</svg>
<div class="a" style="left:152.5px;top:107.2px;font-size:6.9px;line-height:9.7px;color:#111;-webkit-text-stroke:0.25px #111">Nguyễn Văn A<br>132465<br>Trường...</div>
<svg class="a" style="left:152px;top:115px" width="48" height="20"><path d="M0.5 1 Q1.5 0 2.5 1 T4.5 1 T6.5 1 T8.5 1 T10.5 1 T12.5 1 T14.5 1 T16.5 1 T18.5 1 T20.5 1 T22.5 1 T24.5 1 T26.5 1 T28.5 1 T30.5 1 T32.5 1 T34.5 1 T36.5 1" stroke="#e02020" stroke-width="0.6" fill="none"/><path d="M0.5 19.5 Q1.5 18.5 2.5 19.5 T4.5 19.5 T6.5 19.5 T8.5 19.5 T10.5 19.5 T12.5 19.5 T14.5 19.5 T16.5 19.5 T18.5 19.5 T20.5 19.5 T22.5 19.5" stroke="#e02020" stroke-width="0.6" fill="none"/></svg>

<!-- Status -->
<div id="status" class="a"></div>
<div class="a" style="left:3px;top:415px;font-size:5.5px;line-height:9px;color:#e0e0e0">Page 1 of 1</div>
<div class="a" style="left:39px;top:415px;font-size:5.5px;line-height:9px;color:#e0e0e0">5 words</div>
<svg class="a" style="left:66px;top:415px" width="9" height="8" viewBox="0 0 9 8">
 <path d="M0.5 1 H3.5 L4 1.6 L4.5 1 H7.5 V7 H0.5 Z" fill="none" stroke="#ddd" stroke-width="0.7"/>
 <path d="M4 1.6 V7" stroke="#ddd" stroke-width="0.5"/>
 <path d="M5 4 L6 5.2 L8.5 2.5" stroke="#ddd" stroke-width="0.8" fill="none"/>
</svg>
<div class="a" style="left:81px;top:415px;font-size:5.3px;line-height:9px;color:#e0e0e0">English (United States)</div>
<svg class="a" style="left:143px;top:415px" width="8" height="8" viewBox="0 0 8 8">
 <rect x="0.5" y="1" width="7" height="6.5" fill="none" stroke="#ddd" stroke-width="0.7"/>
 <rect x="0.5" y="1" width="7" height="2.2" fill="#ddd"/>
 <rect x="3.5" y="0" width="1" height="2" fill="#464646"/>
</svg>
<svg class="a" style="left:664px;top:416px" width="7" height="7" viewBox="0 0 7 7">
 <path d="M0.5 0.8 H3 L3.5 1.3 L4 0.8 H6.5 V6.5 H4 L3.5 6 L3 6.5 H0.5 Z" fill="#bdbdbd"/>
 <path d="M3.5 1.3 V6" stroke="#464646" stroke-width="0.5"/>
</svg>
<div class="a" style="left:678px;top:414px;width:15px;height:10px;background:#5c5c5c"></div>
<svg class="a" style="left:681px;top:416px" width="9" height="7" viewBox="0 0 9 7">
 <rect x="0.5" y="0.5" width="8" height="6" fill="#c8c8c8"/>
 <path d="M2 2.2 H7 M2 3.5 H7 M2 4.8 H7" stroke="#6a6a6a" stroke-width="0.6"/>
</svg>
<svg class="a" style="left:698px;top:416px" width="8" height="7" viewBox="0 0 8 7">
 <rect x="0.5" y="0.5" width="6" height="5" fill="none" stroke="#c8c8c8" stroke-width="0.8"/>
 <path d="M1.5 2.2 H5.5 M1.5 3.6 H4" stroke="#c8c8c8" stroke-width="0.6"/>
 <circle cx="6" cy="5" r="1.7" fill="#c8c8c8"/>
</svg>
<div class="a" style="left:713px;top:419px;width:4px;height:1px;background:#e0e0e0"></div>
<div class="a" style="left:718px;top:419px;width:52px;height:1px;background:#bdbdbd"></div>
<div class="a" style="left:743px;top:416px;width:2px;height:7px;background:#f0f0f0"></div>
<div class="a" style="left:772px;top:419px;width:5px;height:1px;background:#e0e0e0"></div>
<div class="a" style="left:774px;top:417px;width:1px;height:5px;background:#e0e0e0"></div>
<div class="a" style="left:783px;top:415px;font-size:5.3px;line-height:9px;color:#e0e0e0">100%</div>

<!-- Taskbar -->
<div id="task" class="a"></div>
<svg class="a" style="left:11px;top:433px" width="13" height="12" viewBox="0 0 13 12">
 <defs><linearGradient id="cl" x1="0" y1="0" x2="1" y2="1"><stop offset="0" stop-color="#ffffff"/><stop offset="1" stop-color="#b8d4ee"/></linearGradient></defs>
 <path d="M2.5 9 A2.5 2.5 0 0 1 2.8 4 A3.6 3.6 0 0 1 9.6 3.6 A2.8 2.8 0 0 1 10 9 Z" fill="url(#cl)"/>
 <path d="M5 9.3 L4.2 11.2" stroke="#3f83d8" stroke-width="1.2"/>
</svg>
<div class="a" style="left:27px;top:429px;font-size:6.1px;line-height:9px;color:#1c1c1c">32°C</div>
<div class="a" style="left:27px;top:437px;font-size:6.1px;line-height:9px;color:#444">Mưa nhỏ</div>

<!-- start -->
<svg class="a" style="left:291px;top:432px" width="12" height="12" viewBox="0 0 12 12">
 <defs><linearGradient id="wg" x1="0" y1="0" x2="1" y2="1"><stop offset="0" stop-color="#3ccbf4"/><stop offset="1" stop-color="#1a7fd8"/></linearGradient></defs>
 <rect x="0" y="0" width="5.6" height="5.6" fill="url(#wg)"/><rect x="6.4" y="0" width="5.6" height="5.6" fill="url(#wg)"/>
 <rect x="0" y="6.4" width="5.6" height="5.6" fill="url(#wg)"/><rect x="6.4" y="6.4" width="5.6" height="5.6" fill="url(#wg)"/>
</svg>
<svg class="a" style="left:314px;top:432px" width="12" height="12" viewBox="0 0 12 12">
 <circle cx="7" cy="5" r="3.9" fill="none" stroke="#1a1a1a" stroke-width="1.3"/>
 <path d="M4.2 7.8 L1 11" stroke="#1a1a1a" stroke-width="1.5" stroke-linecap="round"/>
</svg>
<svg class="a" style="left:336px;top:432px" width="11" height="12" viewBox="0 0 11 12">
 <rect x="0.3" y="3.2" width="7.5" height="8.3" fill="#1c1c1c"/>
 <rect x="3.3" y="0.4" width="7.2" height="8" fill="#f2f2f2"/>
 <rect x="3.3" y="0.4" width="7.2" height="8" fill="none" stroke="#c8c8c8" stroke-width="0.4"/>
</svg>
<svg class="a" style="left:360px;top:431px" width="12" height="13" viewBox="0 0 12 13">
 <path d="M3.5 3 V2 A2.5 2 0 0 1 8.5 2 V3" fill="none" stroke="#2c72c8" stroke-width="1"/>
 <rect x="0" y="3" width="12" height="10" rx="1.5" fill="#1a5fb4"/>
 <rect x="4" y="5.5" width="1.8" height="1.8" fill="#f25022"/><rect x="6.2" y="5.5" width="1.8" height="1.8" fill="#7fba00"/>
 <rect x="4" y="7.7" width="1.8" height="1.8" fill="#00a4ef"/><rect x="6.2" y="7.7" width="1.8" height="1.8" fill="#ffb900"/>
</svg>
<svg class="a" style="left:382px;top:432px" width="13" height="11" viewBox="0 0 13 11">
 <path d="M0 1 H5 L6 2.2 H13 V11 H0 Z" fill="#e8a419"/>
 <rect x="0" y="3.5" width="13" height="7.5" fill="#ffd35c"/>
 <rect x="0" y="8" width="13" height="3" fill="#2a78cf"/>
</svg>
<svg class="a" style="left:404px;top:431px" width="14" height="13" viewBox="0 0 14 13">
 <defs><linearGradient id="eg" x1="0" y1="0" x2="1" y2="1"><stop offset="0" stop-color="#35c1f1"/><stop offset="0.6" stop-color="#1f8ad6"/><stop offset="1" stop-color="#0c59a4"/></linearGradient></defs>
 <path d="M12.8 6.8 A6.3 6.3 0 1 0 7.3 12.8 A4.5 4.5 0 0 1 4 8.5 A3 3 0 0 1 9.6 7.4 A2 2 0 0 1 9.2 9.3 H12.6 A6 6 0 0 0 12.8 6.8 Z" fill="url(#eg)"/>
 <path d="M8.5 12 A6 6 0 0 0 12.8 9.6 H9.4 A2.2 2.2 0 0 1 6.6 10.8 Z" fill="#5ad65a"/>
</svg>
<svg class="a" style="left:428px;top:431px" width="13" height="13" viewBox="0 0 13 13">
 <circle cx="6.5" cy="6.5" r="6.2" fill="#ffffff"/>
 <path d="M1.5 9.5 A6.2 6.2 0 0 1 3 1.6" fill="none" stroke="#1b6ef3" stroke-width="1.2"/>
 <text x="6.6" y="8.3" font-size="4.6" text-anchor="middle" fill="#1b6ef3" font-family="Liberation Sans" font-weight="bold">Zalo</text>
</svg>
<svg class="a" style="left:451px;top:431px" width="13" height="13" viewBox="0 0 13 13">
 <rect x="0" y="0" width="13" height="13" rx="3" fill="#19b719"/>
 <ellipse cx="6.5" cy="6" rx="4.8" ry="3.8" fill="#ffffff"/>
 <path d="M5 9.3 L4.6 11 L7 9.6Z" fill="#fff"/>
 <text x="6.5" y="7.2" font-size="2.8" text-anchor="middle" fill="#19b719" font-family="Liberation Sans" font-weight="bold">LINE</text>
</svg>
<div class="a" style="left:471px;top:428px;width:17px;height:20px;background:#e6f3f4;border-radius:2px"></div>
<svg class="a" style="left:473px;top:431px" width="13" height="13" viewBox="0 0 13 13">
 <rect x="4" y="0.5" width="8.5" height="12" rx="0.6" fill="#fdfdfd" stroke="#9ab" stroke-width="0.4"/>
 <path d="M6 3 H11 M6 5 H11 M6 7 H11 M6 9 H11" stroke="#4f7cc4" stroke-width="0.6"/>
 <rect x="0" y="2.5" width="7.5" height="8" rx="0.6" fill="#1f55a8"/>
 <text x="3.75" y="8.8" font-size="5.5" text-anchor="middle" fill="#fff" font-family="Liberation Sans" font-weight="bold">W</text>
</svg>
<svg class="a" style="left:497px;top:431px" width="12" height="12" viewBox="0 0 12 12">
 <rect x="0" y="0" width="12" height="12" rx="2" fill="#0b1a33"/>
 <text x="6" y="8.3" font-size="5.8" text-anchor="middle" fill="#31a8ff" font-family="Liberation Sans" font-weight="bold">Ps</text>
</svg>
<div class="a" style="left:410px;top:446px;width:3px;height:1.2px;background:#777"></div>
<div class="a" style="left:433px;top:446px;width:3px;height:1.2px;background:#777"></div>
<div class="a" style="left:456px;top:446px;width:3px;height:1.2px;background:#777"></div>
<div class="a" style="left:475px;top:446px;width:9px;height:1.5px;background:#4a7f9a"></div>
<div class="a" style="left:502px;top:446px;width:3px;height:1.2px;background:#777"></div>

<!-- tray -->
<svg class="a" style="left:685px;top:435px" width="8" height="5" viewBox="0 0 8 5"><path d="M0.8 4.3 L4 1.1 L7.2 4.3" fill="none" stroke="#222" stroke-width="0.9"/></svg>
<div class="a" style="left:700px;top:429px;font-size:5.8px;line-height:9px;color:#222;text-align:center;width:14px">ENG</div>
<div class="a" style="left:700px;top:437px;font-size:5.8px;line-height:9px;color:#222;text-align:center;width:14px">US</div>
<svg class="a" style="left:722px;top:434px" width="9" height="7" viewBox="0 0 9 7">
 <path d="M0.5 2.5 A6 6 0 0 1 8.5 2.5 M2 4 A4 4 0 0 1 7 4 M3.4 5.4 A2 2 0 0 1 5.6 5.4" fill="none" stroke="#333" stroke-width="0.8"/>
 <circle cx="4.5" cy="6.3" r="0.6" fill="#333"/>
</svg>
<svg class="a" style="left:734px;top:434px" width="8" height="8" viewBox="0 0 8 8">
 <path d="M0.5 2.8 H2 L4.2 0.8 V7.2 L2 5.2 H0.5 Z" fill="none" stroke="#333" stroke-width="0.7"/>
 <path d="M5.6 2.6 A2 2 0 0 1 5.6 5.4" fill="none" stroke="#999" stroke-width="0.6"/>
</svg>
<svg class="a" style="left:746px;top:433px" width="10" height="9" viewBox="0 0 10 9">
 <rect x="2.5" y="1.8" width="6.5" height="5.4" rx="2.7" fill="#1a1a1a"/>
 <path d="M1.5 0.8 L3.2 2.6" stroke="#1a1a1a" stroke-width="0.7"/>
 <path d="M0.5 2.8 H2.5 M0.5 5.8 H2.5" stroke="#1a1a1a" stroke-width="0.7"/>
</svg>
<div class="a" style="left:765px;top:429px;font-size:5.9px;line-height:9px;color:#222">12:35 PM</div>
<div class="a" style="left:765px;top:437.5px;font-size:6px;line-height:9px;color:#222">5/6/2022</div>

</body></html>
